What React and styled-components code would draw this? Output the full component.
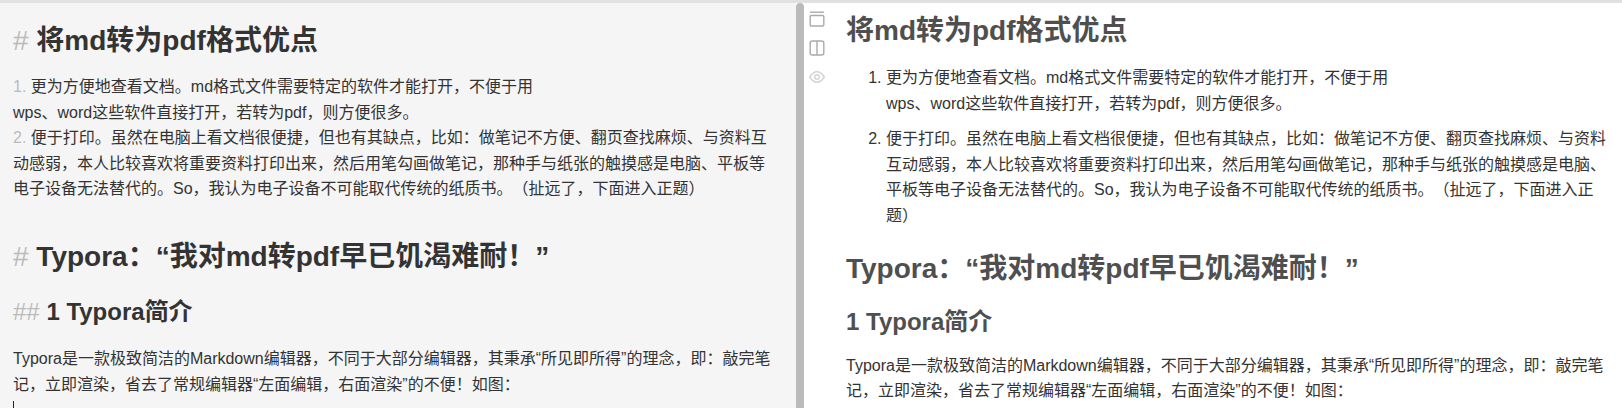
import React from "react"
import styled, { createGlobalStyle } from "styled-components"

const GlobalStyle = createGlobalStyle`
  html, body {
    margin: 0;
    padding: 0;
    overflow: hidden;
    background: #fff;
  }
`

const Page = styled.div`
  height: 408px;
  overflow: hidden;
  display: flex;
  flex-direction: column;
  font-family: "Liberation Sans", "Noto Sans CJK SC", sans-serif;
  font-size: 16px;
  line-height: 25.6px;
  color: #333;
  text-spacing-trim: space-all;
`

const TopStrip = styled.div`
  height: 3px;
  flex: none;
  background: #e1e1e1;
`

const Panes = styled.div`
  flex: 1;
  display: flex;
  min-height: 0;
`

const Editor = styled.div`
  width: 796px;
  flex: none;
  box-sizing: border-box;
  padding: 20px 24px 0 13px;
  background: #f5f5f5;
  color: #333;
`

const Divider = styled.div`
  width: 8px;
  flex: none;
  background: #bbb;
  border-radius: 4px 4px 0 0;
`

const Rail = styled.div`
  width: 42px;
  flex: none;
  display: flex;
  flex-direction: column;
  align-items: flex-start;
  gap: 13px;
  padding: 8px 0 0 5px;
  box-sizing: border-box;
`

const Preview = styled.div`
  flex: 1;
  min-width: 0;
  padding: 10px 15px 0 0;
  color: #333;
`

const SourceTitle = styled.div`
  font-size: 28px;
  line-height: 36px;
  font-weight: 700;
  margin: ${(p) => p.$top || 0}px 0 0;
`

const SourceSub = styled.div`
  font-size: 24px;
  line-height: 32px;
  font-weight: 700;
  margin: 21px 0 18px;
`

const Mark = styled.span`
  color: #bbb;
  font-weight: 400;
`

const SourceLine = styled.div`
  margin-top: ${(p) => p.$top || 0}px;
`

const Caret = styled.div`
  width: 1px;
  height: 22px;
  background: #222;
  margin-top: 4px;
`

const Title = styled.h1`
  font-size: 28px;
  line-height: 36px;
  font-weight: 700;
  color: #4f4f4f;
  margin: ${(p) => p.$top || 0}px 0 0;
`

const Sub = styled.h2`
  font-size: 24px;
  line-height: 32px;
  font-weight: 700;
  color: #4f4f4f;
  margin: 19px 0 15px;
`

const List = styled.ol`
  margin: 16px 0 0;
  padding: 0 0 0 40px;
`

const Item = styled.li`
  margin-bottom: 10px;
`

const Para = styled.p`
  margin: 0;
`

const IconLine = styled.svg`
  display: block;
  width: 16px;
  height: 16px;
  fill: none;
  stroke: ${(p) => p.$tone || "#aaa"};
  stroke-width: 1.4;
`

const App = () => (
  <Page>
    <GlobalStyle />
    <TopStrip />
    <Panes>
      <Editor>
        <SourceTitle>
          <Mark># </Mark>将md转为pdf格式优点
        </SourceTitle>
        <SourceLine $top={15}>
          <Mark>1. </Mark>更为方便地查看文档。md格式文件需要特定的软件才能打开，不便于用
          <br />
          wps、word这些软件直接打开，若转为pdf，则方便很多。
        </SourceLine>
        <SourceLine>
          <Mark>2. </Mark>便于打印。虽然在电脑上看文档很便捷，但也有其缺点，比如：做笔记不方便、翻页查找麻烦、与资料互动感弱，本人比较喜欢将重要资料打印出来，然后用笔勾画做笔记，那种手与纸张的触摸感是电脑、平板等电子设备无法替代的。So，我认为电子设备不可能取代传统的纸质书。（扯远了，下面进入正题）
        </SourceLine>
        <SourceTitle $top={37}>
          <Mark># </Mark>Typora：“我对md转pdf早已饥渴难耐！”
        </SourceTitle>
        <SourceSub>
          <Mark>## </Mark>1 Typora简介
        </SourceSub>
        <SourceLine>
          Typora是一款极致简洁的Markdown编辑器，不同于大部分编辑器，其秉承“所见即所得”的理念，即：敲完笔记，立即渲染，省去了常规编辑器“左面编辑，右面渲染”的不便！如图：
        </SourceLine>
        <Caret />
      </Editor>
      <Divider />
      <Rail>
        <IconLine viewBox="0 0 16 16">
          <path d="M1 1.2h14" />
          <rect x="1.2" y="4.5" width="13.6" height="10.5" rx="1" />
        </IconLine>
        <IconLine viewBox="0 0 16 16">
          <rect x="1.2" y="1" width="13.6" height="14" rx="2" />
          <path d="M8 1v14" />
        </IconLine>
        <IconLine viewBox="0 0 16 16" $tone="#d4d4d4">
          <path d="M.7 8C3 4.400 5.300 2.800 8 2.800s5 1.600 7.300 5.200C13 11.600 10.700 13.200 8 13.200S3 11.600.7 8z" />
          <circle cx="8" cy="8" r="2.300" />
        </IconLine>
      </Rail>
      <Preview>
        <Title>将md转为pdf格式优点</Title>
        <List>
          <Item>
            更为方便地查看文档。md格式文件需要特定的软件才能打开，不便于用
            <br />
            wps、word这些软件直接打开，若转为pdf，则方便很多。
          </Item>
          <Item>
            便于打印。虽然在电脑上看文档很便捷，但也有其缺点，比如：做笔记不方便、翻页查找麻烦、与资料互动感弱，本人比较喜欢将重要资料打印出来，然后用笔勾画做笔记，那种手与纸张的触摸感是电脑、平板等电子设备无法替代的。So，我认为电子设备不可能取代传统的纸质书。（扯远了，下面进入正题）
          </Item>
        </List>
        <Title $top={22}>Typora：“我对md转pdf早已饥渴难耐！”</Title>
        <Sub>1 Typora简介</Sub>
        <Para>
          Typora是一款极致简洁的Markdown编辑器，不同于大部分编辑器，其秉承“所见即所得”的理念，即：敲完笔记，立即渲染，省去了常规编辑器“左面编辑，右面渲染”的不便！如图：
        </Para>
      </Preview>
    </Panes>
  </Page>
)

export default App
